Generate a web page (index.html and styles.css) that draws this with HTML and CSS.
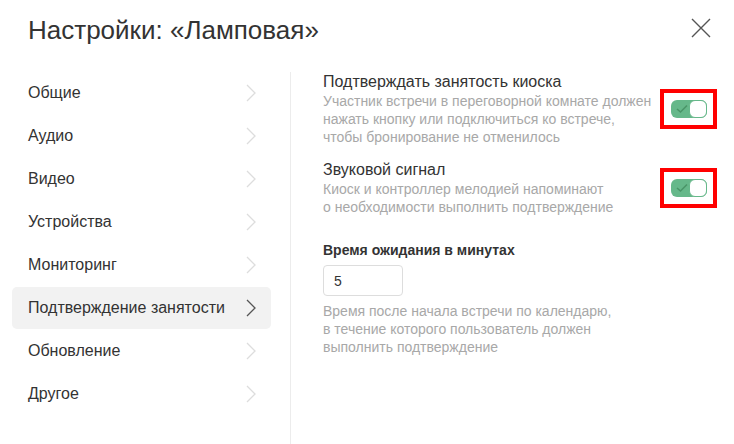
FILE: index.html
```html
<!DOCTYPE html>
<html lang="ru">
<head>
  <meta charset="UTF-8" />
  <title>Настройки: «Ламповая»</title>
  <link rel="stylesheet" href="styles.css">
</head>
<body>

  <div class="header">
    <h1>Настройки: «Ламповая»</h1>
    <button class="close" aria-label="Закрыть">
      <svg width="20" height="20" viewBox="0 0 20 20"><path d="M1 1L19 19M19 1L1 19" stroke="#555" stroke-width="1.4" fill="none"/></svg>
    </button>
  </div>

  <div class="main">
    <ul class="menu">
      <li>Общие <svg class="chev" width="10" height="18" viewBox="0 0 10 18"><path d="M1 1L9 9L1 17" /></svg></li>
      <li>Аудио <svg class="chev" width="10" height="18" viewBox="0 0 10 18"><path d="M1 1L9 9L1 17" /></svg></li>
      <li>Видео <svg class="chev" width="10" height="18" viewBox="0 0 10 18"><path d="M1 1L9 9L1 17" /></svg></li>
      <li>Устройства <svg class="chev" width="10" height="18" viewBox="0 0 10 18"><path d="M1 1L9 9L1 17" /></svg></li>
      <li>Мониторинг <svg class="chev" width="10" height="18" viewBox="0 0 10 18"><path d="M1 1L9 9L1 17" /></svg></li>
      <li class="active">Подтверждение занятости <svg class="chev" width="10" height="18" viewBox="0 0 10 18"><path d="M1 1L9 9L1 17" /></svg></li>
      <li>Обновление <svg class="chev" width="10" height="18" viewBox="0 0 10 18"><path d="M1 1L9 9L1 17" /></svg></li>
      <li>Другое <svg class="chev" width="10" height="18" viewBox="0 0 10 18"><path d="M1 1L9 9L1 17" /></svg></li>
    </ul>

    <div class="content">
      <div class="row">
        <div class="text">
          <div class="title">Подтверждать занятость киоска</div>
          <div class="desc">Участник встречи в переговорной комнате должен<br>нажать кнопку или подключиться ко встрече,<br>чтобы бронирование не отменилось</div>
        </div>
        <div class="mark">
          <div class="toggle">
            <svg class="check" width="12" height="10" viewBox="0 0 12 10"><path d="M1 5L4.5 8L11 1.5" /></svg>
            <span class="knob"></span>
          </div>
        </div>
      </div>

      <div class="row second">
        <div class="text">
          <div class="title">Звуковой сигнал</div>
          <div class="desc">Киоск и контроллер мелодией напоминают<br>о необходимости выполнить подтверждение</div>
        </div>
        <div class="mark">
          <div class="toggle">
            <svg class="check" width="12" height="10" viewBox="0 0 12 10"><path d="M1 5L4.5 8L11 1.5" /></svg>
            <span class="knob"></span>
          </div>
        </div>
      </div>

      <div class="field">
        <label for="timeout">Время ожидания в минутах</label>
        <input type="text" id="timeout" value="5" />
        <div class="desc">Время после начала встречи по календарю,<br>в течение которого пользователь должен<br>выполнить подтверждение</div>
      </div>
    </div>
  </div>

</body>
</html>
```

FILE: styles.css
```css
body {
  font-family: "Liberation Sans", Arial, sans-serif;
  margin: 0;
  background: #fff;
  color: #333;
  width: 734px;
  height: 444px;
  overflow: hidden;
}
.header {
  display: flex;
  justify-content: space-between;
  align-items: center;
  height: 72px;
  padding: 0 23px 0 28px;
  box-sizing: border-box;
}
h1 {
  margin: 0;
  font-size: 26px;
  font-weight: normal;
  color: #333;
  padding-bottom: 11px;
}
.close {
  background: none;
  border: none;
  padding: 0;
  width: 20px;
  height: 20px;
  margin-bottom: 17px;
  cursor: pointer;
}
.main {
  display: flex;
  height: 372px;
}
.menu {
  list-style: none;
  margin: 0;
  padding: 0 19px 0 12px;
  width: 259px;
  border-right: 1px solid #ececec;
  display: flex;
  flex-direction: column;
  gap: 1px;
}
.menu li {
  height: 42px;
  display: flex;
  align-items: center;
  justify-content: space-between;
  padding: 0 15px 0 16px;
  font-size: 16px;
  border-radius: 5px;
}
.chev path {
  fill: none;
  stroke: #ddd;
  stroke-width: 1.3;
}
.menu li.active {
  background: #f2f2f2;
}
.menu li.active .chev path {
  stroke: #555;
}
.content {
  flex: 1;
  padding: 0 17px 0 32px;
}
.row {
  display: flex;
  justify-content: space-between;
  align-items: center;
}
.row.second {
  margin-top: 14px;
}
.title {
  font-size: 16px;
  line-height: 20px;
}
.desc {
  font-size: 14px;
  line-height: 18px;
  color: #a8a8a8;
}
.mark {
  border: 4px solid #ff0000;
  padding: 7px 6px 7px 7px;
}
.toggle {
  width: 36px;
  height: 18px;
  border-radius: 6px;
  background: #66b88a;
  display: flex;
  align-items: center;
  justify-content: space-between;
  box-sizing: border-box;
  padding-left: 5px;
}
.check path {
  fill: none;
  stroke: #4a9568;
  stroke-width: 1.6;
}
.knob {
  width: 18px;
  height: 18px;
  box-sizing: border-box;
  border: 1px solid #66b88a;
  border-radius: 6px;
  background: #fff;
}
.field {
  margin-top: 24px;
}
.field label {
  display: block;
  font-size: 14px;
  font-weight: bold;
  line-height: 20px;
}
.field input {
  display: block;
  margin: 5px 0 6px;
  width: 80px;
  height: 31px;
  box-sizing: border-box;
  border: 1px solid #ddd;
  border-radius: 4px;
  padding: 0 10px;
  font-family: inherit;
  font-size: 14px;
  color: #333;
}
```
